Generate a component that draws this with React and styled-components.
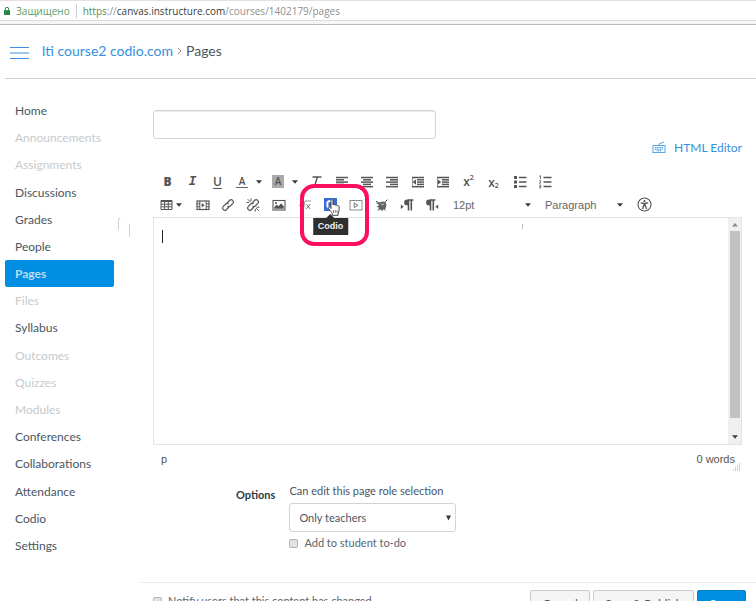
import React from "react";
import styled, { createGlobalStyle, css } from "styled-components";

const GlobalStyle = createGlobalStyle`
  * { box-sizing: border-box; }
  body {
    margin: 0;
    background: #fff;
    color: #4a565f;
    font-family: Lato, "Open Sans", sans-serif;
    font-size: 12px;
  }
  button, input, select, textarea { font-family: inherit; margin: 0; }
`;

const Shell = styled.div`
  height: 100vh;
  overflow: hidden;
  background: #fff;
`;

/* ---------- address bar ---------- */

const AddressBar = styled.div`
  display: flex;
  align-items: center;
  height: 21px;
  padding-left: 4px;
  border-top: 1px solid #e2e2e2;
  border-bottom: 1px solid #dcdcdc;
  font-family: "Open Sans", "Noto Sans", sans-serif;
  font-size: 10px;
  line-height: 14px;
`;

const Secure = styled.span`
  display: flex;
  align-items: center;
  gap: 6px;
  padding-right: 6px;
  color: #5a9e6c;
  border-right: 1px solid #ccc;
`;

const Url = styled.span`
  padding-left: 6px;
  color: #8f8f8f;
`;

const Scheme = styled.span`
  color: #4f9160;
`;

const Host = styled.span`
  color: #3c3c3c;
`;

const ChromeEdge = styled.div`
  height: 4px;
  background: #f6f6f6;
  border-bottom: 1px solid #b9b9b9;
`;

/* ---------- course header ---------- */

const CourseHeader = styled.header`
  display: flex;
  align-items: center;
  gap: 13px;
  height: 54px;
  margin-left: 5px;
  padding: 0 5px 2px;
  border-bottom: 1px solid #cdd4d8;
`;

const MenuButton = styled.button`
  display: flex;
  padding: 4px 0 0;
  border: 0;
  background: none;
  color: #3f8fe0;
`;

const Crumbs = styled.nav`
  display: flex;
  align-items: center;
  gap: 4px;
  font-size: 14px;
  line-height: 20px;
  color: #4a565f;
`;

const Link = styled.a`
  color: #3290dc;
  text-decoration: none;
`;

/* ---------- layout ---------- */

const Body = styled.div`
  display: flex;
  align-items: flex-start;
`;

const SideNav = styled.nav`
  position: relative;
  flex: 0 0 114px;
  padding: 18px 0 0 5px;
`;

const NavList = styled.ul`
  display: grid;
  grid-auto-rows: 1fr;
  height: 462px;
  margin: 0;
  padding: 0;
  list-style: none;
`;

const NavLink = styled.a`
  display: flex;
  align-items: center;
  height: 100%;
  padding-left: 10px;
  border-radius: 2px;
  font-size: 12px;
  text-decoration: none;
  color: ${(p) => (p.$muted ? "#c6cacd" : "#4a565f")};
  ${(p) =>
    p.$active &&
    css`
      background: #008ee2;
      color: #bcdcf2;
      font-weight: 700;
    `}
`;

const Main = styled.main`
  flex: 1;
  min-width: 0;
  padding-left: 27px;
`;

const Form = styled.form`
  padding: 31px 14px 0 12px;
`;

const TitleInput = styled.input`
  display: block;
  width: 283px;
  max-width: 100%;
  height: 29px;
  padding: 0 8px;
  border: 1px solid #d2d5d7;
  border-radius: 3px;
  box-shadow: inset 0 1px 1px #ececec;
  font-size: 12px;
`;

const SwitchRow = styled.div`
  display: flex;
  justify-content: flex-end;
  height: 31px;
`;

const SwitchLink = styled(Link)`
  display: flex;
  align-items: center;
  gap: 8px;
  height: 16px;
  font-size: 12px;
`;

/* ---------- toolbar ---------- */

const Toolbar = styled.div`
  display: flex;
  flex-direction: column;
  padding: 0 0 1px 2px;
`;

const ToolRow = styled.div`
  display: flex;
  gap: 1px;
  height: 23px;
`;

const ToolGroup = styled.div`
  display: flex;
`;

const Tool = styled.button`
  position: relative;
  display: flex;
  align-items: center;
  justify-content: ${(p) => (p.$split ? "flex-start" : "center")};
  gap: ${(p) => (p.$tight ? 3 : 8)}px;
  width: ${(p) => p.$w || 25}px;
  height: 23px;
  padding: 0 0 0 ${(p) => (p.$split ? "5px" : "0")};
  border: 0;
  background: none;
  color: #555;
`;

const Picker = styled.label`
  display: grid;
  align-items: center;
  width: ${(p) => p.$w}px;
  > * { grid-area: 1 / 1; }
  > svg { justify-self: end; margin-right: ${(p) => p.$end}px; pointer-events: none; }
`;

const PickerSelect = styled.select`
  appearance: none;
  width: 100%;
  height: 22px;
  padding: 0 0 0 8px;
  border: 0;
  background: none;
  color: #666;
  font-family: "Liberation Sans", Arial, sans-serif;
  font-size: 11px;
`;

const Highlight = styled.span`
  position: absolute;
  top: -9px;
  left: -18px;
  width: 69px;
  height: 62px;
  border: 4px solid #fb1060;
  border-radius: 14px;
  pointer-events: none;
  z-index: 3;
`;

const Tooltip = styled.span`
  position: absolute;
  top: 25px;
  left: 50%;
  transform: translateX(-50%);
  padding: 0 5px;
  background: #2f2f2f;
  color: #f2f2f2;
  font: 700 9px/17px "Liberation Sans", Arial, sans-serif;
  z-index: 2;
  &::before {
    content: "";
    position: absolute;
    left: 50%;
    top: -4px;
    margin-left: -4px;
    border: 4px solid transparent;
    border-top: 0;
    border-bottom-color: #2f2f2f;
  }
`;

const Pointer = styled.svg`
  position: absolute;
  top: 5px;
  left: 9px;
  z-index: 4;
`;

/* ---------- editor ---------- */

const Editor = styled.div`
  position: relative;
  display: flex;
  height: 228px;
  border: 1px solid #e3e3e3;
`;

const EditorText = styled.textarea`
  flex: 1;
  min-width: 0;
  padding: 10px 8px;
  border: 0;
  outline: 0;
  resize: none;
  background: none;
  font-size: 12px;
`;

const Caret = styled.span`
  position: absolute;
  top: 12px;
  left: 8px;
  width: 1px;
  height: 13px;
  background: #222;
`;

const EditorMark = styled.span`
  position: absolute;
  top: 6px;
  left: 368px;
  width: 1px;
  height: 5px;
  background: #c4c4c4;
`;

const ScrollTrack = styled.div`
  display: flex;
  flex-direction: column;
  align-items: center;
  justify-content: space-between;
  width: 13px;
  padding: 5px 0;
  background: #f0f0f0;
`;

const ScrollThumb = styled.div`
  flex: 1;
  width: 10px;
  margin: 4px 0 17px;
  background: #c1c1c1;
`;

const Status = styled.div`
  position: relative;
  display: flex;
  justify-content: space-between;
  padding: 5px 7px 0 8px;
  font: 11px/18px "Liberation Sans", Arial, sans-serif;
  color: #555;
`;

const Grip = styled.svg`
  position: absolute;
  right: 1px;
  top: 18px;
`;

/* ---------- options ---------- */

const Options = styled.fieldset`
  display: flex;
  align-items: flex-start;
  gap: 14px;
  margin: 0;
  padding: 15px 0 31px 83px;
  border: 0;
  font-size: 11px;
`;

const OptionsTitle = styled.span`
  padding-top: 4px;
  font-weight: 700;
  line-height: 16px;
  color: #2d3b45;
`;

const OptionsFields = styled.div`
  display: flex;
  flex-direction: column;
`;

const FieldLabel = styled.label`
  line-height: 16px;
  color: #4a565f;
`;

const RoleBox = styled.div`
  display: grid;
  align-items: center;
  width: 167px;
  margin: 4px 0 3px;
  > * { grid-area: 1 / 1; }
  > svg { justify-self: end; margin-right: 5px; pointer-events: none; }
`;

const RoleSelect = styled.select`
  appearance: none;
  width: 100%;
  height: 29px;
  padding: 0 9px;
  border: 1px solid #cfd4d7;
  border-radius: 3px;
  background: #fff;
  color: #4a565f;
  font-size: 11px;
`;

const CheckLabel = styled.label`
  display: flex;
  align-items: center;
  gap: 6px;
  font-size: 11px;
  line-height: 16px;
  color: #59656d;
`;

const Check = styled.input`
  appearance: none;
  width: 9px;
  height: 9px;
  border: 1px solid #b4b4b4;
  border-radius: 2px;
  background: #e2e2e2;
`;

/* ---------- footer ---------- */

const Footer = styled.footer`
  display: flex;
  align-items: flex-start;
  justify-content: space-between;
  padding: 7px 10px 8px 12px;
  border-top: 1px solid #e6e8e9;
`;

const Notify = styled.div`
  padding-top: 3px;
`;

const Actions = styled.div`
  display: flex;
  gap: 3px;
`;

const Action = styled.button`
  height: 27px;
  padding: 0 11px;
  border: 1px solid ${(p) => (p.$primary ? "#0081cf" : "#c7cdd1")};
  border-radius: 2px;
  background: ${(p) => (p.$primary ? "#008ee2" : "#f5f5f5")};
  color: ${(p) => (p.$primary ? "#fff" : "#4a565f")};
  font-size: 12px;
  line-height: 25px;
`;

/* ---------- icons ---------- */

const Icon = ({ children, w = 14, h = 14 }) => (
  <svg width={w} height={h} viewBox={`0 0 ${w} ${h}`} fill="none" stroke="currentColor" aria-hidden="true">
    {children}
  </svg>
);

const Down = () => (
  <svg width="6" height="4" viewBox="0 0 6 4" aria-hidden="true">
    <path d="M0 0.3h6L3 3.7z" fill="#3c3c3c" />
  </svg>
);

const Up = () => (
  <svg width="6" height="4" viewBox="0 0 6 4" aria-hidden="true">
    <path d="M0 3.5h6L3 0z" fill="#8a8a8a" />
  </svg>
);

const Glyph = styled.span`
  font-family: "Open Sans", sans-serif;
  font-size: 12px;
  line-height: 14px;
  font-weight: ${(p) => (p.$bold ? 800 : 600)};
  font-style: ${(p) => (p.$italic ? "italic" : "normal")};
  text-decoration: ${(p) => (p.$under ? "underline" : "none")};
  text-underline-offset: 2px;
`;

const SerifGlyph = styled(Glyph)`
  font-family: "Liberation Mono", monospace;
  font-size: 13px;
  font-weight: 700;
`;

const Swatch = styled.span`
  width: 12px;
  height: 13px;
  font: 600 10px/12px "Open Sans", sans-serif;
  text-align: center;
  border-bottom: 1px solid ${(p) => (p.$fill ? "#aaa" : "#666")};
  background: ${(p) => (p.$fill ? "#aaa" : "none")};
`;

const Script = styled.span`
  display: flex;
  align-items: ${(p) => (p.$low ? "flex-end" : "flex-start")};
  height: 14px;
  font: 600 12px/13px "Open Sans", sans-serif;
  small { font-size: 7px; line-height: 6px; }
`;

const lineSets = {
  left: [[1, 13], [1, 9], [1, 13], [1, 9], [1, 13]],
  center: [[1, 13], [3, 11], [1, 13], [3, 11], [1, 13]],
  right: [[1, 13], [5, 13], [1, 13], [5, 13], [1, 13]],
  dent: [[1, 13], [6, 13], [6, 13], [6, 13], [1, 13]],
};

const Lines = ({ kind, arrow }) => (
  <Icon>
    {lineSets[kind].map(([a, b], i) => (
      <path key={i} d={`M${a} ${2.5 + i * 2.3}H${b}`} strokeWidth="1.5" />
    ))}
    {arrow && <path d="M1.5 2.5v9.2" strokeWidth="1" opacity=".6" />}
    {arrow === "out" && <path d="M5 4.4v5.4L1.6 7.1z" fill="currentColor" stroke="none" />}
    {arrow === "in" && <path d="M1.8 4.4v5.4l3.4-2.7z" fill="currentColor" stroke="none" />}
  </Icon>
);

const ClearIcon = () => (
  <Icon>
    <path d="M3.5 2h9M8.3 2L5.7 11M3.5 11.2h4" strokeWidth="1.4" />
    <path d="M9.5 9.5l3 3m0-3l-3 3" strokeWidth="1" />
  </Icon>
);

const BulletsIcon = () => (
  <Icon>
    <path d="M1 2.5h3M1 7h3M1 11.5h3" strokeWidth="3" />
    <path d="M6 2.5h7.5M6 7h7.5M6 11.5h7.5" strokeWidth="1.4" />
  </Icon>
);

const NumbersIcon = () => (
  <Icon>
    <path d="M1.3 1.4l1.2-.8v3.6M1.2 5.7h1.5v1.2L1.3 8.2h1.6M1.2 10h1.5v3H1.2m0-1.5h1.5" strokeWidth=".8" />
    <path d="M5.5 2.5h8M5.5 7h8M5.5 11.5h8" strokeWidth="1.4" />
  </Icon>
);

const TableIcon = () => (
  <Icon w={13}>
    <path d="M1 2.5h11v9H1zM1 3.5h11M1 6.2h11M1 8.8h11M4.6 2.5v9M8.3 2.5v9" strokeWidth="1" />
  </Icon>
);

const FilmIcon = () => (
  <Icon>
    <rect x="1" y="3" width="12" height="8.5" strokeWidth="1.2" />
    <path d="M3.8 3v8.5M10.2 3v8.5M1 5.8h2.8M1 8.7h2.8M10.2 5.8H13M10.2 8.7H13" strokeWidth="1" />
    <path d="M5.7 5v4.5l3-2.2z" fill="currentColor" stroke="none" />
  </Icon>
);

const ChainIcon = ({ broken }) => (
  <Icon>
    <g strokeWidth="1.2" strokeLinecap="round">
      <path d="M6.2 5L8.7 2.3a2.2 2.2 0 013.2 3L9.3 8a2.2 2.2 0 01-2.5.3" />
      <path d="M7.8 9l-2.5 2.7a2.2 2.2 0 01-3.2-3L4.7 6a2.2 2.2 0 012.5-.3" />
      {broken && <path d="M2 1.5l2 2M5 .8v2M1 4.5h2M12.5 12.5l-2-2M9.2 13.2v-2M13 9.2h-2" strokeWidth="1" />}
    </g>
  </Icon>
);

const ImageIcon = () => (
  <Icon>
    <rect x="1" y="2.5" width="12" height="9.5" strokeWidth="1.1" />
    <path d="M2.3 10.8V9l2.5-2.5 1.7 1.7L9 5.2l2.8 3v2.6z" fill="currentColor" stroke="none" />
    <circle cx="4" cy="5" r="1" fill="currentColor" stroke="none" />
  </Icon>
);

const RootIcon = () => (
  <Icon>
    <path d="M1 7.5h2M4 8l1.4 3.5L7 3h6" strokeWidth=".9" opacity=".65" />
    <path d="M8.3 6l4 5m0-5l-4 5" strokeWidth="1" opacity=".8" />
  </Icon>
);

const CodioIcon = () => (
  <svg width="14" height="14" viewBox="0 0 14 14" aria-hidden="true">
    <rect width="13" height="13" fill="#376bd8" />
    <path d="M8.5 3.2H4.6L3.4 4.4v4.2l1.2 1.2H7" fill="none" stroke="#fff" strokeWidth="2" />
  </svg>
);

const PlayIcon = () => (
  <Icon>
    <rect x="1" y="2.5" width="12" height="9.5" stroke="#8d8d8d" strokeWidth="1" />
    <path d="M5.2 5v4.6L9 7.3z" stroke="#777" strokeWidth="1" />
  </Icon>
);

const PlugIcon = () => (
  <Icon>
    <path d="M4 4.5l3-1 3.5.5 1 3-1 3.5-3 1.5-3.5-.5-.7-3z" fill="#666" stroke="none" />
    <path d="M1.5 5l3 1M2 9l2.5-1M3 12.5l2-3M7 13V9M10 12.5l-.5-3M10 4l2.5-2.5M1 3.5l3 1" strokeWidth="1" />
    <path d="M6 5.5l1 1.5 2-1" stroke="#ddd" strokeWidth=".7" />
  </Icon>
);

const ParaIcon = ({ rtl }) => (
  <Icon>
    <g transform={rtl ? "translate(-3 0)" : undefined}>
      <path d="M8 2H13.4M8.5 2v10.5M11.3 2v10.5" strokeWidth="1.6" />
      <path d="M8.5 1.5H7a2.8 2.8 0 000 5.8h1.5z" fill="currentColor" stroke="none" />
    </g>
    {rtl ? (
      <path d="M13.2 6.5v4.4L10.4 8.7z" fill="currentColor" stroke="none" />
    ) : (
      <path d="M.8 6.5v4.4l3-2.2z" fill="currentColor" stroke="none" />
    )}
  </Icon>
);

const AccessIcon = () => (
  <Icon w={15} h={15}>
    <circle cx="7.5" cy="7.5" r="6.5" strokeWidth="1.1" />
    <circle cx="7.5" cy="4" r="1.1" fill="currentColor" stroke="none" />
    <path d="M3.8 5.8l3.7.7 3.7-.7M7.5 6v3M7 7.5L5.5 12M8 7.5L9.5 12" strokeWidth="1.3" />
  </Icon>
);

const KeyboardIcon = () => (
  <Icon>
    <rect x="1" y="5.5" width="12" height="7" strokeWidth="1" opacity=".8" />
    <path d="M7 5.5V4l5-2" strokeWidth="1" opacity=".8" />
    <path d="M3 7.6h8M3 9.2h8M4.5 10.8h5" strokeWidth="1" strokeDasharray="1.2 .5" />
  </Icon>
);

const LockIcon = () => (
  <svg width="6" height="8" viewBox="0 0 6 8" aria-hidden="true">
    <path d="M1.3 3.5V2a1.7 1.7 0 013.4 0v1.5" fill="none" stroke="#278545" strokeWidth="1" />
    <rect y="3.2" width="6" height="4.8" fill="#278545" />
  </svg>
);

const HandPointer = () => (
  <Pointer width="15" height="19" viewBox="0 0 15 19" aria-hidden="true">
    <path
      d="M4 1.6c0-1.1 2-1.1 2 0V7c.2-1 2-.9 2.1.3.4-.8 2-.6 2.1.6.5-.6 1.9-.3 1.9.9v3.4c0 1.2-.9 2-1 3.5v1.6H5.3v-1.6C4.6 14 2.5 12.3 1.3 10.3.7 9.2 2 8.4 2.9 9.3L4 10.5z"
      fill="#fff"
      stroke="#333"
      strokeWidth=".9"
    />
    <path d="M6.5 12v3M8.3 12v3M10.1 12v3" stroke="#555" strokeWidth=".7" />
  </Pointer>
);

const Marks = styled.svg`
  position: absolute;
  top: 138px;
  left: 117px;
`;

const navItems = [
  ["Home"],
  ["Announcements", true],
  ["Assignments", true],
  ["Discussions"],
  ["Grades"],
  ["People"],
  ["Pages"],
  ["Files", true],
  ["Syllabus"],
  ["Outcomes", true],
  ["Quizzes", true],
  ["Modules", true],
  ["Conferences"],
  ["Collaborations"],
  ["Attendance"],
  ["Codio"],
  ["Settings"],
];

const ToolButton = ({ label, split, tight, w, children }) => (
  <Tool type="button" aria-label={label} $split={split} $tight={tight} $w={w}>
    {children}
    {split && <Down />}
  </Tool>
);

export default function App() {
  return (
    <Shell>
      <GlobalStyle />
      <AddressBar>
        <Secure>
          <LockIcon />
          Защищено
        </Secure>
        <Url>
          <Scheme>https</Scheme>://<Host>canvas.instructure.com</Host>/courses/1402179/pages
        </Url>
      </AddressBar>
      <ChromeEdge />

      <CourseHeader>
        <MenuButton type="button" aria-label="Menu">
          <Icon w={19} h={14}>
            <path d="M0 1.5h19M0 7h19M0 12.5h19" strokeWidth="1.2" />
          </Icon>
        </MenuButton>
        <Crumbs aria-label="Breadcrumb">
          <Link href="#course">lti course2 codio.com</Link>
          <Icon w={5} h={8}>
            <path d="M1 1l3 3-3 3" stroke="#888" />
          </Icon>
          <span>Pages</span>
        </Crumbs>
      </CourseHeader>

      <Body>
        <SideNav aria-label="Course">
          <NavList>
            {navItems.map(([name, muted]) => (
              <li key={name}>
                <NavLink href={`#${name.toLowerCase()}`} $muted={muted} $active={name === "Pages"}>
                  {name}
                </NavLink>
              </li>
            ))}
          </NavList>
          <Marks width="14" height="22" viewBox="0 0 14 22" aria-hidden="true">
            <path d="M1.5 13V1.5h2M12.5 7v13" fill="none" stroke="#d0d0d0" />
          </Marks>
        </SideNav>

        <Main>
          <Form onSubmit={(e) => e.preventDefault()}>
            <TitleInput type="text" aria-label="Page title" />
            <SwitchRow>
              <SwitchLink href="#html">
                <KeyboardIcon />
                HTML Editor
              </SwitchLink>
            </SwitchRow>

            <Toolbar role="toolbar" aria-label="Formatting">
              <ToolRow>
                <ToolGroup>
                  <ToolButton label="Bold"><Glyph $bold>B</Glyph></ToolButton>
                  <ToolButton label="Italic"><SerifGlyph $italic>I</SerifGlyph></ToolButton>
                  <ToolButton label="Underline"><Glyph $under>U</Glyph></ToolButton>
                </ToolGroup>
                <ToolGroup>
                  <ToolButton label="Text color" split w={36}><Swatch>A</Swatch></ToolButton>
                  <ToolButton label="Background color" split w={36}><Swatch $fill>A</Swatch></ToolButton>
                  <ToolButton label="Clear formatting"><ClearIcon /></ToolButton>
                </ToolGroup>
                <ToolGroup>
                  <ToolButton label="Align left"><Lines kind="left" /></ToolButton>
                  <ToolButton label="Align center"><Lines kind="center" /></ToolButton>
                  <ToolButton label="Align right"><Lines kind="right" /></ToolButton>
                </ToolGroup>
                <ToolGroup>
                  <ToolButton label="Decrease indent"><Lines kind="dent" arrow="out" /></ToolButton>
                  <ToolButton label="Increase indent"><Lines kind="dent" arrow="in" /></ToolButton>
                </ToolGroup>
                <ToolGroup>
                  <ToolButton label="Superscript"><Script>x<small>2</small></Script></ToolButton>
                  <ToolButton label="Subscript"><Script $low>x<small>2</small></Script></ToolButton>
                </ToolGroup>
                <ToolGroup>
                  <ToolButton label="Bullet list"><BulletsIcon /></ToolButton>
                  <ToolButton label="Numbered list"><NumbersIcon /></ToolButton>
                </ToolGroup>
              </ToolRow>

              <ToolRow>
                <ToolButton label="Table" split tight w={34}><TableIcon /></ToolButton>
                <ToolGroup>
                  <ToolButton label="Insert media"><FilmIcon /></ToolButton>
                  <ToolButton label="Insert link"><ChainIcon /></ToolButton>
                  <ToolButton label="Remove link"><ChainIcon broken /></ToolButton>
                </ToolGroup>
                <ToolButton label="Embed image"><ImageIcon /></ToolButton>
                <ToolButton label="Insert equation"><RootIcon /></ToolButton>
                <ToolGroup>
                  <ToolButton label="Codio">
                    <CodioIcon />
                    <Tooltip role="tooltip">Codio</Tooltip>
                    <Highlight />
                    <HandPointer />
                  </ToolButton>
                  <ToolButton label="Record media"><PlayIcon /></ToolButton>
                </ToolGroup>
                <ToolGroup>
                  <ToolButton label="More tools"><PlugIcon /></ToolButton>
                  <ToolButton label="Left to right"><ParaIcon /></ToolButton>
                  <ToolButton label="Right to left"><ParaIcon rtl /></ToolButton>
                </ToolGroup>
                <Picker $w={91} $end={5}>
                  <PickerSelect aria-label="Font size"><option>12pt</option></PickerSelect>
                  <Down />
                </Picker>
                <Picker $w={94} $end={8}>
                  <PickerSelect aria-label="Block format"><option>Paragraph</option></PickerSelect>
                  <Down />
                </Picker>
                <ToolButton label="Check accessibility"><AccessIcon /></ToolButton>
              </ToolRow>
            </Toolbar>

            <Editor>
              <EditorText aria-label="Page content" />
              <Caret />
              <EditorMark />
              <ScrollTrack aria-hidden="true">
                <Up />
                <ScrollThumb />
                <Down />
              </ScrollTrack>
            </Editor>
            <Status>
              <span>p</span>
              <span>0 words</span>
              <Grip width="8" height="8" viewBox="0 0 8 8" aria-hidden="true">
                <path d="M6 1h2M4 3h4M2 5h6M0 7h8" stroke="#a69daa" strokeDasharray="1 1" />
              </Grip>
            </Status>

            <Options aria-labelledby="options-title">
              <OptionsTitle id="options-title">Options</OptionsTitle>
              <OptionsFields>
                <FieldLabel htmlFor="role">Can edit this page role selection</FieldLabel>
                <RoleBox>
                  <RoleSelect id="role"><option>Only teachers</option></RoleSelect>
                  <svg width="5" height="6" viewBox="0 0 5 6" aria-hidden="true">
                    <path d="M0 0.5h5L2.5 5.5z" fill="#2d3b45" />
                  </svg>
                </RoleBox>
                <CheckLabel>
                  <Check type="checkbox" />
                  Add to student to-do
                </CheckLabel>
              </OptionsFields>
            </Options>
          </Form>

          <Footer>
            <Notify>
              <CheckLabel>
                <Check type="checkbox" />
                Notify users that this content has changed
              </CheckLabel>
            </Notify>
            <Actions>
              <Action type="button">Cancel</Action>
              <Action type="button">Save &amp; Publish</Action>
              <Action type="button" $primary>Save</Action>
            </Actions>
          </Footer>
        </Main>
      </Body>
    </Shell>
  );
}
